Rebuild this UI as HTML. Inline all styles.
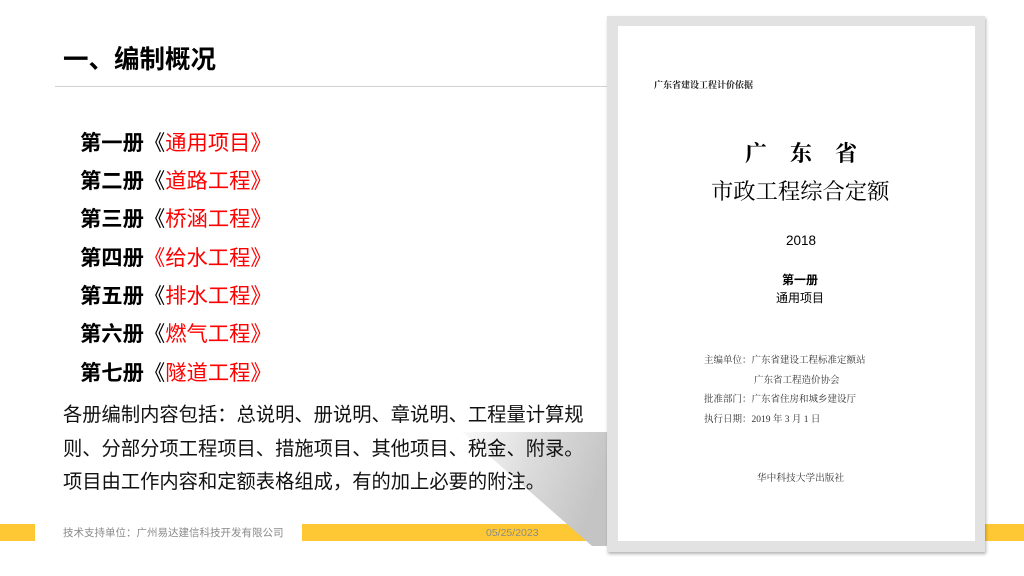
<!DOCTYPE html>
<html><head><meta charset="utf-8"><style>
*{margin:0;padding:0;box-sizing:border-box}
body{width:1024px;height:576px;position:relative;overflow:hidden;background:#fff;font-family:"Liberation Sans","Noto Sans CJK SC",sans-serif;color:#000}
.a{position:absolute;white-space:nowrap}
.h{left:63px;top:42px;font-size:25.5px;font-weight:bold;line-height:36px}
.line{left:55px;top:86px;width:552px;height:1px;background:#d0d0d0}
.li{left:80px;font-size:21.3px;line-height:28px}
.li b{font-weight:bold}
.li span{color:#f00}
.p{left:63px;top:399px;font-size:19.3px;line-height:33.5px;color:#111}
.bar{background:#fec834;height:17px;top:524px}
.ft{font-size:10.5px;color:#8a8a8a;top:526px;line-height:14px}
.frame{left:607px;top:16px;width:378px;height:536px;background:#e2e2e2;box-shadow:1px 2px 3px rgba(0,0,0,.3)}
.inner{left:618px;top:26px;width:357px;height:515px;background:#fff}
.serif{font-family:"Liberation Serif","Noto Serif CJK SC",serif}
</style></head><body>
<div class="a bar" style="left:0;width:35px"></div>
<div class="a bar" style="left:302px;width:310px"></div>
<div class="a bar" style="left:980px;width:44px"></div>
<svg class="a" style="left:0;top:0" width="1024" height="576"><defs><linearGradient id="g" x1="0" y1="0" x2="1" y2="0.3"><stop offset="0" stop-color="#fafafa"/><stop offset="0.5" stop-color="#dcdcdc"/><stop offset="1" stop-color="#c4c4c4"/></linearGradient></defs><polygon points="462,432 607,432 607,546 592,546" fill="url(#g)"/></svg>
<div class="a h">一、编制概况</div>
<div class="a line"></div>
<div class="a li" style="top:129px"><b>第一册</b>《<span>通用项目》</span></div>
<div class="a li" style="top:167px"><b>第二册</b>《<span>道路工程》</span></div>
<div class="a li" style="top:205px"><b>第三册</b>《<span>桥涵工程》</span></div>
<div class="a li" style="top:244px"><b>第四册</b><span>《给水工程》</span></div>
<div class="a li" style="top:282px"><b>第五册</b>《<span>排水工程》</span></div>
<div class="a li" style="top:320px"><b>第六册</b>《<span>燃气工程》</span></div>
<div class="a li" style="top:359px"><b>第七册</b>《<span>隧道工程》</span></div>
<div class="a p">各册编制内容包括：总说明、册说明、章说明、工程量计算规<br>则、分部分项工程项目、措施项目、其他项目、税金、附录。<br>项目由工作内容和定额表格组成，有的加上必要的附注。</div>
<div class="a ft" style="left:63px">技术支持单位：广州易达建信科技开发有限公司</div>
<div class="a ft" style="left:486px">05/25/2023</div>
<div class="a frame"></div>
<div class="a inner"></div>
<div class="a serif" style="left:654px;top:78px;font-size:9px;font-weight:bold;color:#222">广东省建设工程计价依据</div>
<div class="a serif" style="left:745px;top:141px;font-size:22px;letter-spacing:23px;line-height:26px;font-weight:bold">广东省</div>
<div class="a serif" style="left:711px;top:179px;font-size:22.3px;line-height:26px">市政工程综合定额</div>
<div class="a" style="left:786px;top:233px;font-size:13.5px;line-height:16px">2018</div>
<div class="a" style="left:782px;top:273px;font-size:12px;font-weight:bold;line-height:15px">第一册</div>
<div class="a" style="left:776px;top:291px;font-size:12px;line-height:15px">通用项目</div>
<div class="a serif" style="left:704px;top:352px;font-size:9.5px;line-height:19.5px;color:#333">主编单位：广东省建设工程标准定额站<br><span style="padding-left:50px">广东省工程造价协会</span><br>批准部门：广东省住房和城乡建设厅<br>执行日期：2019 年 3 月 1 日</div>
<div class="a serif" style="left:757px;top:470px;font-size:9.7px;color:#333">华中科技大学出版社</div>
</body></html>
